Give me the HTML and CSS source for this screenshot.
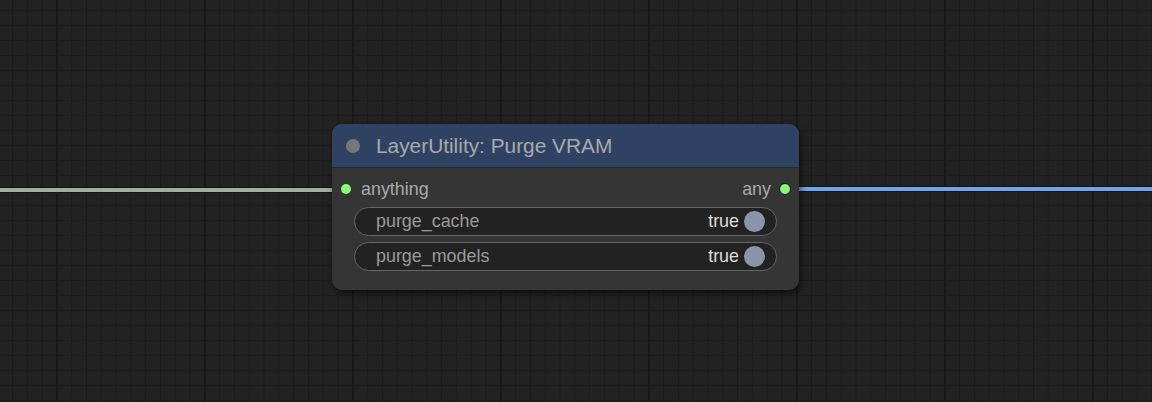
FILE: index.html
```html
<!DOCTYPE html>
<html>
<head>
<meta charset="utf-8">
<link rel="stylesheet" href="styles.css">
</head>
<body>
<div class="canvas">
  <div class="wire wire-in"></div>
  <div class="wire wire-out"></div>
  <div class="node">
    <div class="node-title">
      <span class="title-dot"></span>
      <span class="title-text">LayerUtility: Purge VRAM</span>
    </div>
    <div class="node-body">
      <div class="slots">
        <div class="slot slot-in"><span class="slot-dot"></span><span>anything</span></div>
        <div class="slot slot-out"><span>any</span><span class="slot-dot out"></span></div>
      </div>
      <div class="widget">
        <span class="w-label">purge_cache</span>
        <span class="w-value">true</span>
        <span class="toggle"></span>
      </div>
      <div class="widget">
        <span class="w-label">purge_models</span>
        <span class="w-value">true</span>
        <span class="toggle"></span>
      </div>
    </div>
  </div>
</div>
</body>
</html>
```

FILE: styles.css
```css
html, body {
  margin: 0;
  padding: 0;
  width: 1152px;
  height: 402px;
  overflow: hidden;
  background: #222222;
  font-family: "Liberation Sans", Arial, sans-serif;
}

.canvas {
  position: relative;
  width: 1152px;
  height: 402px;
  background-color: #222222;
  background-image:
    linear-gradient(to right, #181818 0, #181818 2px, transparent 2px),
    linear-gradient(to right, #1b1b1b 0, #1b1b1b 1px, transparent 1px),
    linear-gradient(to bottom, #1b1b1b 0, #1b1b1b 1px, transparent 1px);
  background-size: 148px 100%, 14.8px 100%, 100% 15px;
  background-position: 56px 0, 12px 0, 0 10px;
}

.wire {
  position: absolute;
  height: 4px;
  border-top: 1px solid #151515;
  border-bottom: 1px solid #151515;
}
.wire-in {
  left: 0;
  width: 334px;
  top: 187px;
  background: #9fb09f;
}
.wire-out {
  left: 797px;
  right: 0;
  top: 186px;
  background: #6ea6ee;
}

.node {
  position: absolute;
  left: 332px;
  top: 124px;
  width: 467px;
  height: 166px;
  border-radius: 10px;
  background: #353535;
  box-shadow: 2px 3px 6px rgba(0, 0, 0, 0.55);
  overflow: hidden;
  display: flex;
  flex-direction: column;
}

.node-title {
  height: 44px;
  background: #2f4263;
  display: flex;
  align-items: center;
  box-sizing: border-box;
  padding-left: 14px;
  padding-top: 1px;
  border-bottom: 1px solid #2b2b2b;
}
.title-dot {
  width: 14px;
  height: 14px;
  border-radius: 50%;
  background: #777777;
  margin-right: 16px;
}
.title-text {
  color: #a9a9a9;
  font-size: 20.85px;
}

.node-body {
  flex: 1;
  display: flex;
  flex-direction: column;
  padding: 0 22px 0 22px;
}

.slots {
  display: flex;
  justify-content: space-between;
  align-items: center;
  margin: 0 -14px 0 -13px;
  padding-top: 3px;
  box-sizing: border-box;
  height: 39px;
}
.slot {
  display: flex;
  align-items: center;
  color: #a9a9a9;
  font-size: 17.9px;
}
.slot-dot {
  width: 10px;
  height: 10px;
  border-radius: 50%;
  background: #8cf87a;
}
.slot-in .slot-dot { margin-right: 10px; }
.slot-out .slot-dot { margin-left: 8px; }
.slot-dot.out {
  border: 1px solid #111;
  box-sizing: content-box;
}

.widget {
  height: 29px;
  box-sizing: border-box;
  border: 1px solid #666666;
  border-radius: 15px;
  background: #222222;
  display: flex;
  align-items: center;
  padding: 0 11px 0 21px;
  margin-bottom: 6px;
}
.w-label {
  flex: 1;
  color: #9a9a9a;
  font-size: 17.9px;
}
.w-value {
  color: #dddddd;
  font-size: 17.9px;
  margin-right: 5px;
}
.toggle {
  width: 21px;
  height: 21px;
  border-radius: 50%;
  background: #8a95ab;
}
```
